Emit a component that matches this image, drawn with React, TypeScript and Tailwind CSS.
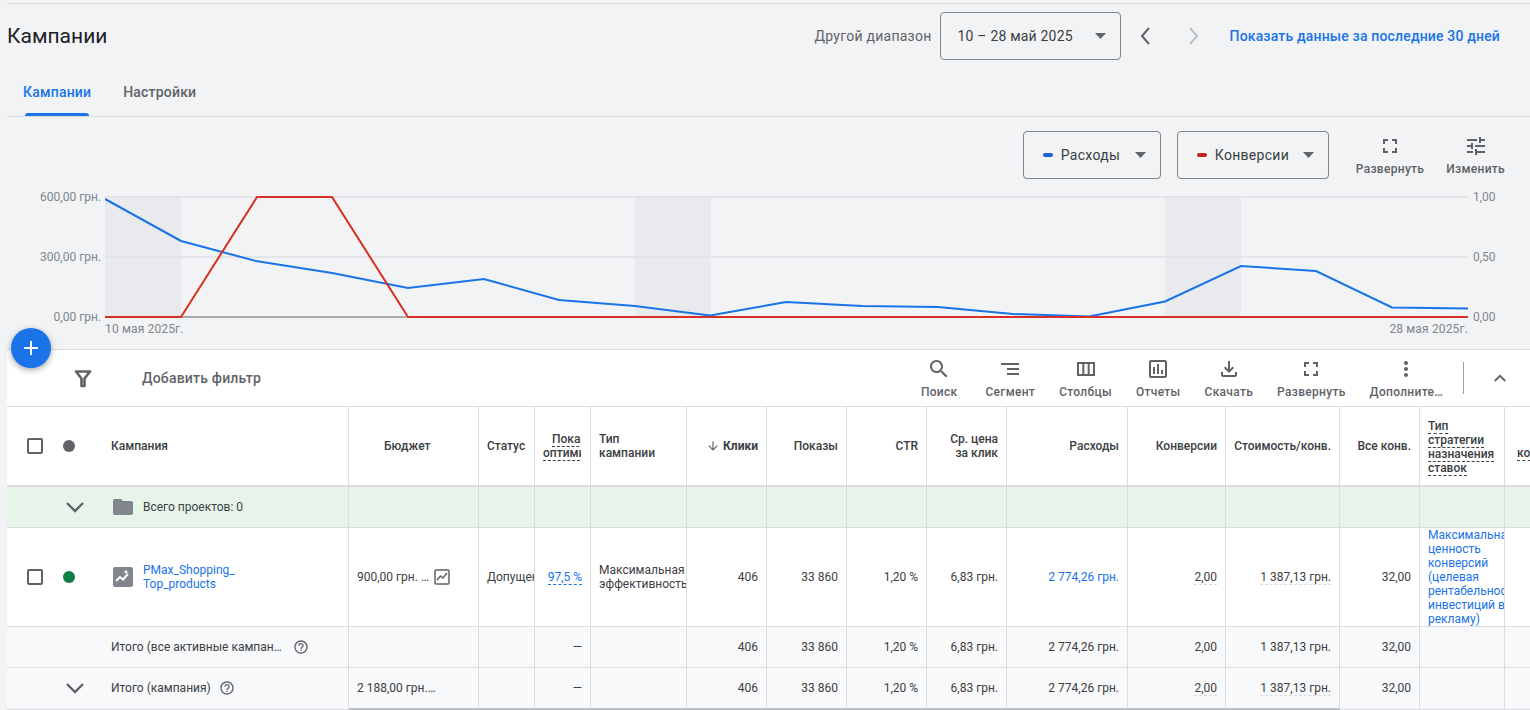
import type { ReactNode } from "react";

const COLS =
  "grid grid-cols-[342px_130px_56px_56px_96px_80px_80px_80px_80px_121px_98px_114px_80px_85px_25px]";

const icons: Record<string, string> = {
  search:
    "M15.5 14h-.79l-.28-.27C15.41 12.59 16 11.11 16 9.5 16 5.91 13.09 3 9.5 3S3 5.91 3 9.5 5.91 16 9.5 16c1.61 0 3.09-.59 4.23-1.57l.27.28v.79l5 4.99L20.49 19l-4.99-5zm-6 0C7.01 14 5 11.99 5 9.5S7.01 5 9.5 5 14 7.01 14 9.5 11.99 14 9.5 14z",
  segment: "M9 18h12v-2H9v2zM3 6v2h18V6H3zm6 7h12v-2H9v2z",
  columns:
    "M3 5v14h18V5H3zm5.33 12H5V7h3.33v10zm5.34 0h-3.33V7h3.33v10zM19 17h-3.33V7H19v10z",
  reports:
    "M9 17H7v-7h2v7zm4 0h-2V7h2v10zm4 0h-2v-4h2v4zm2 2H5V5h14v14zm0-16H5c-1.1 0-2 .9-2 2v14c0 1.1.9 2 2 2h14c1.1 0 2-.9 2-2V5c0-1.1-.9-2-2-2z",
  download:
    "M18 15v3H6v-3H4v3c0 1.1.9 2 2 2h12c1.1 0 2-.9 2-2v-3h-2zm-1-4l-1.41-1.41L13 12.17V4h-2v8.17L8.41 9.59 7 11l5 5 5-5z",
  expand:
    "M7 14H5v5h5v-2H7v-3zm-2-4h2V7h3V5H5v5zm12 7h-3v2h5v-5h-2v3zM14 5v2h3v3h2V5h-5z",
  more: "M12 8c1.1 0 2-.9 2-2s-.9-2-2-2-2 .9-2 2 .9 2 2 2zm0 2c-1.1 0-2 .9-2 2s.9 2 2 2 2-.9 2-2-.9-2-2-2zm0 6c-1.1 0-2 .9-2 2s.9 2 2 2 2-.9 2-2-.9-2-2-2z",
  tune: "M3 17v2h6v-2H3zM3 5v2h10V5H3zm10 16v-2h8v-2h-8v-2h-2v6h2zM7 9v2H3v2h4v2h2V9H7zm14 4v-2H11v2h10zm-6-4h2V7h4V5h-4V3h-2v6z",
  help: "M11 18h2v-2h-2v2zm1-16C6.48 2 2 6.48 2 12s4.48 10 10 10 10-4.48 10-10S17.52 2 12 2zm0 18c-4.41 0-8-3.59-8-8s3.59-8 8-8 8 3.59 8 8-3.59 8-8 8zm0-14c-2.21 0-4 1.79-4 4h2c0-1.1.9-2 2-2s2 .9 2 2c0 2-3 1.75-3 5h2c0-2.25 3-2.5 3-5 0-2.21-1.79-4-4-4z",
  folder:
    "M10 4H4c-1.1 0-2 .9-2 2v12c0 1.1.9 2 2 2h16c1.1 0 2-.9 2-2V8c0-1.1-.9-2-2-2h-8l-2-2z",
};

function Icon({ name, className }: { name: string; className: string }) {
  return (
    <svg viewBox="0 0 24 24" fill="currentColor" className={className}>
      <path d={icons[name]} />
    </svg>
  );
}

function Chevron({ up, className }: { up?: boolean; className: string }) {
  return (
    <svg viewBox="0 0 24 24" fill="none" stroke="currentColor" strokeWidth="2.4" className={className}>
      <path d={up ? "M5 16l7-7 7 7" : "M4 8l8 8 8-8"} />
    </svg>
  );
}

function Caret() {
  return (
    <svg viewBox="0 0 11 6" className="h-[6px] w-[11px] shrink-0 fill-[#5f6368]">
      <path d="M0 0h11L5.5 6z" />
    </svg>
  );
}

function Checkbox() {
  return <div className="h-4 w-4 shrink-0 rounded-[2px] border-2 border-[#5f6368]" />;
}

function Tool({ icon, label, className = "" }: { icon: string; label: string; className?: string }) {
  return (
    <div className={"flex flex-col items-center text-[#5f6368] " + className}>
      <Icon name={icon} className="h-6 w-6" />
      <span className="mt-[3px] whitespace-nowrap text-xs font-medium leading-4 tracking-[0.3px]">{label}</span>
    </div>
  );
}

function MetricChip({ label, color, width }: { label: string; color: string; width: string }) {
  return (
    <div className={"flex h-12 items-center gap-2 rounded border border-[#80868b] pl-[19px] pr-[14px] " + width}>
      <span className={"h-1 w-[10px] rounded-sm " + color} />
      <span className="text-sm tracking-[0.3px] text-[#3c4043]">{label}</span>
      <span className="ml-auto">
        <Caret />
      </span>
    </div>
  );
}

function Cell({
  children,
  className = "px-2",
  last,
}: {
  children?: ReactNode;
  className?: string;
  last?: boolean;
}) {
  return (
    <div
      className={
        "flex items-center overflow-hidden border-r border-[#dadce0] " +
        (last ? "border-b-2 border-b-[#bdc1c6] " : "") +
        className
      }
    >
      {children}
    </div>
  );
}

function Dashed({ children, blue }: { children: ReactNode; blue?: boolean }) {
  return (
    <span
      className={
        "block w-fit whitespace-nowrap border-b border-dashed leading-[13px] " +
        (blue ? "mt-px border-[#1a73e8]" : "border-[#3c4043]")
      }
    >
      {children}
    </span>
  );
}

function SoftDash({ children }: { children: ReactNode }) {
  return <span className="mt-px border-b border-dashed border-[#dadce0] leading-[14px]">{children}</span>;
}

const R = "justify-end px-2 text-right";
// last row: cells outside the dark underline keep a thin line
const THIN = " border-b border-b-[#dadce0] pb-px";

function Metrics({ blueCost, dashed, last }: { blueCost?: boolean; dashed?: boolean; last?: boolean }) {
  return (
    <>
      <Cell className={R} last={last}>406</Cell>
      <Cell className={R} last={last}>33 860</Cell>
      <Cell className={R} last={last}>1,20 %</Cell>
      <Cell className={R} last={last}>6,83 грн.</Cell>
      <Cell className={R + (blueCost ? " text-[#1a73e8]" : "")} last={last}>2 774,26 грн.</Cell>
      <Cell className={R} last={last}>{dashed ? <SoftDash>2,00</SoftDash> : "2,00"}</Cell>
      <Cell className={R} last={last}>{dashed ? <SoftDash>1 387,13 грн.</SoftDash> : "1 387,13 грн."}</Cell>
      <Cell className={R + (last ? THIN : "")}>32,00</Cell>
    </>
  );
}

const blueLine =
  "105,199 181,241 256,261 332,273 408,288 484,279 559,300 635,306 710,315.5 786,302 862,306 938,307 1013,314 1089,316.5 1165,301.5 1241,266 1316,271 1392,307.5 1468,308.5";
const redLine = "105,317 181,317 257,197 332,197 408,317 1468,317";

export default function App() {
  return (
    <div className="relative h-[710px] w-[1530px] overflow-hidden bg-[#f1f3f5] font-['Roboto','Liberation_Sans',sans-serif] text-xs text-[#3c4043]">
      <div className="ml-[7px] mt-[3px] border-t border-[#dadce0]">
        {/* title + date range */}
        <div className="flex h-[65px] items-center pb-[2px]">
          <h1 className="text-[21px] font-normal text-[#202124]">Кампании</h1>
          <span className="ml-auto text-sm tracking-[0.25px] text-[#5f6368]">Другой диапазон</span>
          <div className="ml-2 flex h-12 w-[181px] items-center justify-between rounded border border-[#80868b] pl-[17px] pr-[14px]">
            <span className="text-sm tracking-[0.2px] text-[#3c4043]">10 – 28 май 2025</span>
            <Caret />
          </div>
          <svg viewBox="0 0 24 24" fill="none" stroke="#5f6368" strokeWidth="2" className="ml-3 h-6 w-6">
            <path d="M16 4l-7 8 7 8" />
          </svg>
          <svg viewBox="0 0 24 24" fill="none" stroke="#bdc1c6" strokeWidth="2" className="ml-[25px] h-6 w-6">
            <path d="M8 4l7 8-7 8" />
          </svg>
          <a className="ml-[24px] mr-[30px] text-sm font-medium tracking-[0.17px] text-[#1a73e8]">
            Показать данные за последние 30 дней
          </a>
        </div>

        {/* tabs */}
        <div className="flex h-12 gap-8 border-b border-[#dadce0] pl-4 text-sm font-medium tracking-[0.2px]">
          <div className="flex flex-col justify-end">
            <span className="mb-[13px] leading-4 text-[#1a73e8]">Кампании</span>
            <div className="mx-[2px] h-[3px] rounded-t-[3px] bg-[#1a73e8]" />
          </div>
          <div className="flex flex-col justify-end">
            <span className="mb-4 leading-4 text-[#5f6368]">Настройки</span>
          </div>
        </div>

        {/* chart */}
        <div className="h-[232px]">
          <div className="flex items-start pt-[14px]">
            <div className="ml-auto flex gap-4">
              <MetricChip label="Расходы" color="bg-[#1a62d6]" width="w-[138px]" />
              <MetricChip label="Конверсии" color="bg-[#c5221f]" width="w-[152px]" />
            </div>
            <div className="ml-[27px] mr-[25px] mt-[3px] flex gap-[22px]">
              <Tool icon="expand" label="Развернуть" />
              <Tool icon="tune" label="Изменить" />
            </div>
          </div>
          <div className="mt-[10px] flex items-start text-[#80868b]">
            <div className="flex h-[136px] w-[94px] flex-col justify-between text-right leading-4">
              <span>600,00 грн.</span>
              <span>300,00 грн.</span>
              <span>0,00 грн.</span>
            </div>
            <svg viewBox="105 196 1363 122" className="ml-[4px] mt-[7px] h-[122px] w-[1363px] shrink-0">
              <rect x="105" y="196" width="76" height="121" fill="#e8eaed" />
              <rect x="635" y="196" width="76" height="121" fill="#e8eaed" />
              <rect x="1165" y="196" width="76" height="121" fill="#e8eaed" />
              <path d="M105 197H1468M105 257H1468" stroke="#e3e5e8" strokeWidth="2" />
              <path d="M105 317H1468" stroke="#aaaaaa" strokeWidth="2" />
              <polyline points={blueLine} fill="none" stroke="#1a73e8" strokeWidth="2" />
              <polyline points={redLine} fill="none" stroke="#d93025" strokeWidth="2" />
            </svg>
            <div className="ml-[5px] flex h-[136px] flex-col justify-between leading-4">
              <span>1,00</span>
              <span>0,50</span>
              <span>0,00</span>
            </div>
          </div>
          <div className="-mt-1 flex w-[1461px] justify-between pl-[98px] leading-4 tracking-[0.15px] text-[#80868b]">
            <span>10 мая 2025г.</span>
            <span>28 мая 2025г.</span>
          </div>
        </div>

        {/* filter bar */}
        <div className="flex h-[58px] items-center border-y border-[#dadce0] bg-white">
          <svg viewBox="0 0 24 24" fill="none" stroke="#5f6368" strokeWidth="2.6" className="ml-[64px] h-6 w-6">
            <path d="M5 5.5h14l-5.5 7V20h-3v-7.500z" strokeLinejoin="round" />
          </svg>
          <span className="ml-[47px] text-sm font-medium tracking-[0.2px] text-[#5f6368]">Добавить фильтр</span>
          <div className="ml-auto flex gap-6">
            <Tool icon="search" label="Поиск" className="mr-1" />
            <Tool icon="segment" label="Сегмент" />
            <Tool icon="columns" label="Столбцы" />
            <Tool icon="reports" label="Отчеты" />
            <Tool icon="download" label="Скачать" />
            <Tool icon="expand" label="Развернуть" />
            <Tool icon="more" label="Дополните…" />
          </div>
          <div className="ml-5 h-8 w-px bg-[#9aa0a6]" />
          <Chevron up className="ml-[27px] mr-[21px] h-[18px] w-[18px] text-[#5f6368]" />
        </div>

        {/* table header */}
        <div className={COLS + " h-[80px] border-b-2 border-[#dadce0] bg-white font-medium leading-[14px]"}>
          <Cell className="pl-5">
            <Checkbox />
            <span className="ml-5 h-3 w-3 rounded-full bg-[#5f6368]" />
            <span className="ml-9">Кампания</span>
          </Cell>
          <Cell className="pl-[35px]">Бюджет</Cell>
          <Cell className="pl-2">Статус</Cell>
          <Cell className="px-2 pt-[2px]">
            <div className="w-[38px] overflow-hidden">
              <div className="ml-[9px]"><Dashed>Показатель</Dashed></div>
              <Dashed>оптимизации</Dashed>
            </div>
          </Cell>
          <Cell>
            <span>Тип<br />кампании</span>
          </Cell>
          <Cell className={R}>
            <svg viewBox="0 0 24 24" className="mr-[3px] h-[14px] w-[14px] fill-[#5f6368]">
              <path d="M20 12l-1.41-1.41L13 16.17V4h-2v12.17l-5.58-5.59L4 12l8 8 8-8z" />
            </svg>
            <span className="font-bold">Клики</span>
          </Cell>
          <Cell className={R}>Показы</Cell>
          <Cell className={R}>CTR</Cell>
          <Cell className={R}>
            <span>Ср. цена<br />за клик</span>
          </Cell>
          <Cell className={R}>Расходы</Cell>
          <Cell className={R}>Конверсии</Cell>
          <Cell className={R}>Стоимость/конв.</Cell>
          <Cell className={R}>Все конв.</Cell>
          <Cell className="px-2 pt-1">
            <div className="flex flex-col">
              <Dashed>Тип</Dashed>
              <Dashed>стратегии</Dashed>
              <Dashed>назначения</Dashed>
              <Dashed>ставок</Dashed>
            </div>
          </Cell>
          <div className="flex items-center overflow-hidden pl-3 pt-4">
            <Dashed>конв.</Dashed>
          </div>
        </div>

        {/* folder row */}
        <div className={COLS + " h-[41px] border-b border-[#dadce0] bg-[#e6f4ea]"}>
          <Cell className="pl-14">
            <Chevron className="h-6 w-6 text-[#5f6368]" />
            <Icon name="folder" className="ml-[24px] h-6 w-6 text-[#80868b]" />
            <span className="ml-2">Всего проектов: 0</span>
          </Cell>
          {Array.from({ length: 13 }).map((_, i) => (
            <Cell key={i} />
          ))}
          <div />
        </div>

        {/* campaign row */}
        <div className={COLS + " h-[99px] border-b border-[#dadce0] bg-white leading-[14px]"}>
          <Cell className="pl-5">
            <Checkbox />
            <span className="ml-5 h-3 w-3 rounded-full bg-[#0d7f46]" />
            <svg viewBox="0 0 20 20" className="ml-[38px] h-5 w-5 shrink-0">
              <rect width="20" height="20" rx="2" fill="#80868b" />
              <path d="M3 14l4-4 3 2.500 5-5.500" fill="none" stroke="#fff" strokeWidth="2" />
              <path d="M13 2.500l.7 1.800 1.800.7-1.800.7-.7 1.800-.7-1.800-1.800-.7 1.800-.7z" fill="#fff" />
            </svg>
            <span className="ml-[10px] text-[#1a73e8]">PMax_Shopping_<br />Top_products</span>
          </Cell>
          <Cell>
            <span className="whitespace-nowrap">900,00 грн. …</span>
            <svg viewBox="0 0 16 16" fill="none" stroke="#5f6368" className="ml-[5px] h-4 w-4 shrink-0" strokeWidth="1.500">
              <rect x="1" y="1" width="14" height="14" rx="1" />
              <path d="M3 11l3.500-4 2.500 2 4-5" />
            </svg>
          </Cell>
          <Cell className="pl-2">
            <span className="whitespace-nowrap">Допущено</span>
          </Cell>
          <Cell className="justify-end px-2 text-[#1a73e8]">
            <Dashed blue>97,5 %</Dashed>
          </Cell>
          <Cell className="pl-2">
            <span className="whitespace-nowrap">Максимальная<br />эффективность</span>
          </Cell>
          <Metrics blueCost dashed />
          <Cell className="pl-2">
            <span className="whitespace-nowrap text-[#1a73e8]">
              Максимальная<br />ценность<br />конверсий<br />(целевая<br />рентабельность<br />инвестиций в<br />рекламу)
            </span>
          </Cell>
          <div />
        </div>

        {/* totals */}
        <div className={COLS + " h-[41px] border-b border-[#dadce0] bg-[#f8f9fa]"}>
          <Cell className="pl-[104px]">
            <span className="whitespace-nowrap">Итого (все активные кампан…</span>
            <Icon name="help" className="ml-[11px] h-4 w-4 text-[#5f6368]" />
          </Cell>
          <Cell />
          <Cell />
          <Cell className={R}>—</Cell>
          <Cell />
          <Metrics />
          <Cell />
          <div />
        </div>
        <div className={COLS + " h-[42px] bg-[#f8f9fa]"}>
          <Cell className={"pl-14" + THIN}>
            <Chevron className="h-6 w-6 text-[#5f6368]" />
            <span className="ml-6 whitespace-nowrap">Итого (кампания)</span>
            <Icon name="help" className="ml-2 h-4 w-4 text-[#5f6368]" />
          </Cell>
          <Cell last>
            <span className="whitespace-nowrap">2 188,00 грн.…</span>
          </Cell>
          <Cell last />
          <Cell className={R} last>—</Cell>
          <Cell last />
          <Metrics dashed last />
          <Cell className={THIN} />
          <div className="border-b border-[#dadce0]" />
        </div>
      </div>

      {/* floating add button */}
      <button className="absolute left-[11px] top-[328px] flex h-10 w-10 items-center justify-center rounded-full bg-[#1a73e8] shadow-[0_2px_6px_rgba(0,0,0,0.35)]">
        <svg viewBox="0 0 24 24" className="h-6 w-6 fill-white">
          <path d="M19 13h-6v6h-2v-6H5v-2h6V5h2v6h6v2z" />
        </svg>
      </button>
    </div>
  );
}
